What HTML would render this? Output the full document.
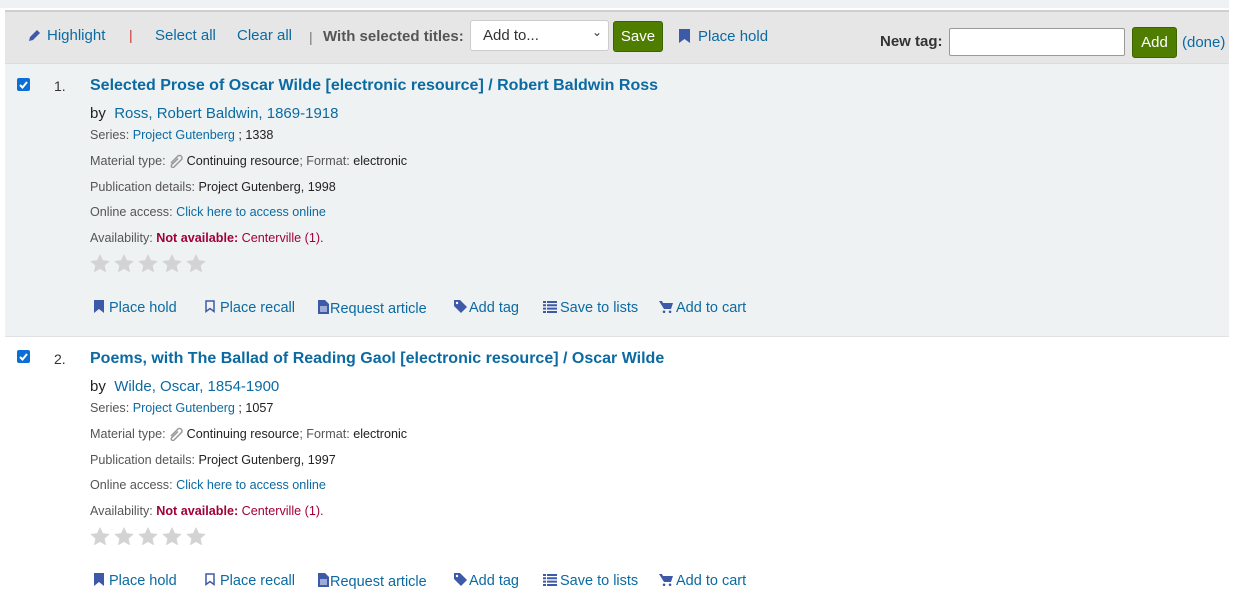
<!DOCTYPE html>
<html><head><meta charset="utf-8"><style>
*{margin:0;padding:0;box-sizing:border-box}
body{width:1239px;height:604px;background:#fff;font-family:"Liberation Sans",sans-serif;position:relative;overflow:hidden;color:#222}
.a{position:absolute;white-space:nowrap}
a,.l{color:#0b6aa2;text-decoration:none}
.g{color:#555}
.sm{font-size:12.6px}
.t{font-size:16px;font-weight:bold;color:#0b6aa2}
.act{font-size:14.5px;color:#0b6aa2}
.act svg{margin-right:5px;vertical-align:-1px}
.ic{fill:#3d5aa8}
.cb{width:13px;height:13px;background:#0b6fd6;border-radius:2px}
.btn{background:#4f7d00;border:1px solid #3d6300;border-radius:3px;color:#fff;font-size:14px;text-align:center}
</style></head><body>
<svg width="0" height="0" style="position:absolute"><defs>
<symbol id="st" viewBox="0 0 20 19"><path d="M10 0l2.9 6.3 6.9.7-5.2 4.6 1.5 6.8L10 14.9 3.9 18.4l1.5-6.8L.2 7l6.9-.7z" fill="#d3d3d3"/></symbol>
<symbol id="clip" viewBox="0 0 14 14"><path d="M2 9l7-7a2.5 2.5 0 0 1 3.5 3.5L5 13a1.6 1.6 0 0 1-2.3-2.3L9 4.5" fill="none" stroke="#999" stroke-width="1.5"/></symbol>
</defs></svg>
<div class="a" style="left:0;top:0;width:1239px;height:8px;background:#eef2f3"></div>
<div class="a" style="left:1229px;top:0;width:10px;height:604px;background:#fff"></div>
<div class="a" style="left:5px;top:10px;width:1224px;height:54px;background:#e6e6e6;border-top:2px solid #cfcfcf;border-bottom:1px solid #dcdcdc"></div>
<svg class="a" style="left:28px;top:29px" width="13" height="13" viewBox="0 0 13 13"><path class="ic" d="M1 12l1-4 7-7 3 3-7 7z"/></svg>
<div class="a act" style="left:47px;top:27px;font-size:15px">Highlight</div>
<div class="a" style="left:129px;top:27px;color:#c33;font-size:14px">|</div>
<div class="a act" style="left:155px;top:27px;font-size:15px">Select all</div>
<div class="a act" style="left:237px;top:27px;font-size:15px">Clear all</div>
<div class="a" style="left:309px;top:29px;color:#777;font-size:14px">|</div>
<div class="a" style="left:323px;top:28px;font-size:15px;font-weight:bold;color:#555">With selected titles:</div>
<div class="a" style="left:470px;top:20px;width:139px;height:31px;background:#fff;border:1px solid #ccc;border-radius:3px;font-size:15px;padding:6px 12px;color:#333">Add to...<span style="position:absolute;right:6px;top:4px;font-size:12px">&#8964;</span></div>
<div class="a btn" style="left:613px;top:21px;width:50px;height:31px;line-height:29px;font-size:15px">Save</div>
<svg class="a" style="left:679px;top:29px" width="11" height="14" viewBox="0 0 11 14"><path class="ic" d="M0 0h11v14l-5.5-4L0 14z"/></svg>
<div class="a act" style="left:698px;top:28px;font-size:15px">Place hold</div>
<div class="a" style="left:880px;top:33px;font-size:15px;font-weight:bold;color:#333">New tag:</div>
<div class="a" style="left:949px;top:28px;width:176px;height:28px;background:#fff;border:1px solid #999;border-radius:2px"></div>
<div class="a btn" style="left:1132px;top:27px;width:45px;height:31px;line-height:29px;font-size:15px">Add</div>
<div class="a act" style="left:1182px;top:34px;font-size:15px">(done)</div>

<div class="a" style="left:5px;top:64px;width:1224px;height:273px;background:#eff2f3;border-bottom:1px solid #dfe3e5"></div>

<div class="a cb" style="left:17px;top:78px"><svg width="13" height="13"><path d="M3 7l2.5 2.5L10 4" stroke="#fff" stroke-width="2" fill="none"/></svg></div>
<div class="a" style="left:54px;top:78px;font-size:14px;color:#333">1.</div>
<div class="a t" style="left:90px;top:77px">Selected Prose of Oscar Wilde [electronic resource] / Robert Baldwin Ross</div>
<div class="a" style="left:90px;top:105px;font-size:15px">by&nbsp; <span class="l">Ross, Robert Baldwin, 1869-1918</span></div>
<div class="a sm g" style="left:90px;top:128px">Series: <span class="l">Project Gutenberg</span> <span style="color:#222">; 1338</span></div>
<div class="a sm g" style="left:90px;top:154px">Material type: <svg width="14" height="14" style="vertical-align:-3px"><use href="#clip"/></svg> <span style="color:#222">Continuing resource</span>; Format: <span style="color:#222">electronic</span></div>
<div class="a sm g" style="left:90px;top:180px">Publication details: <span style="color:#222">Project Gutenberg, 1998</span></div>
<div class="a sm g" style="left:90px;top:205px">Online access: <span class="l">Click here to access online</span></div>
<div class="a sm g" style="left:90px;top:231px">Availability: <b style="color:#a0003a">Not available:</b> <span style="color:#a0003a">Centerville (1).</span></div>
<svg class="a" style="left:90px;top:254px" width="120" height="19"><use href="#st" x="0" width="20" height="19"/><use href="#st" x="24" width="20" height="19"/><use href="#st" x="48" width="20" height="19"/><use href="#st" x="72" width="20" height="19"/><use href="#st" x="96" width="20" height="19"/></svg>
<div class="a act" style="left:94px;top:300px"><svg width="10" height="13" viewBox="0 0 10 13"><path class="ic" d="M0 0h10v13L5 9 0 13z"/></svg>Place hold</div>
<div class="a act" style="left:205px;top:300px"><svg width="10" height="13" viewBox="0 0 10 13"><path d="M1 1h8v10.5L5 8.5 1 11.5z" fill="none" stroke="#3d5aa8" stroke-width="1.5"/></svg>Place recall</div>
<div class="a act" style="left:318px;top:300px"><svg width="11" height="14" viewBox="0 0 11 14" style="margin-right:1px"><path class="ic" d="M0 0h7l4 4v10H0z"/><path d="M2 7h7M2 9h7M2 11h7" stroke="#fff"/></svg>Request article</div>
<div class="a act" style="left:454px;top:300px"><svg width="13" height="13" viewBox="0 0 13 13" style="margin-right:2px"><path class="ic" d="M0 0h6l7 7-6 6-7-7z"/><circle cx="3" cy="3" r="1.2" fill="#fff"/></svg>Add tag</div>
<div class="a act" style="left:543px;top:300px"><svg width="14" height="12" viewBox="0 0 14 12" style="margin-right:3px"><path class="ic" d="M0 0h3v2H0zM4 0h10v2H4zM0 3.3h3v2H0zM4 3.3h10v2H4zM0 6.6h3v2H0zM4 6.6h10v2H4zM0 10h3v2H0zM4 10h10v2H4z"/></svg>Save to lists</div>
<div class="a act" style="left:659px;top:300px"><svg width="14" height="13" viewBox="0 0 14 13" style="margin-right:3px"><path class="ic" d="M0 1h3l1 2h10l-2 6H5zM5 10.5a1.3 1.3 0 1 0 .1 0zM11 10.5a1.3 1.3 0 1 0 .1 0z"/></svg>Add to cart</div>

<div class="a cb" style="left:17px;top:350px"><svg width="13" height="13"><path d="M3 7l2.5 2.5L10 4" stroke="#fff" stroke-width="2" fill="none"/></svg></div>
<div class="a" style="left:54px;top:351px;font-size:14px;color:#333">2.</div>
<div class="a t" style="left:90px;top:350px">Poems, with The Ballad of Reading Gaol [electronic resource] / Oscar Wilde</div>
<div class="a" style="left:90px;top:378px;font-size:15px">by&nbsp; <span class="l">Wilde, Oscar, 1854-1900</span></div>
<div class="a sm g" style="left:90px;top:401px">Series: <span class="l">Project Gutenberg</span> <span style="color:#222">; 1057</span></div>
<div class="a sm g" style="left:90px;top:427px">Material type: <svg width="14" height="14" style="vertical-align:-3px"><use href="#clip"/></svg> <span style="color:#222">Continuing resource</span>; Format: <span style="color:#222">electronic</span></div>
<div class="a sm g" style="left:90px;top:453px">Publication details: <span style="color:#222">Project Gutenberg, 1997</span></div>
<div class="a sm g" style="left:90px;top:478px">Online access: <span class="l">Click here to access online</span></div>
<div class="a sm g" style="left:90px;top:504px">Availability: <b style="color:#a0003a">Not available:</b> <span style="color:#a0003a">Centerville (1).</span></div>
<svg class="a" style="left:90px;top:527px" width="120" height="19"><use href="#st" x="0" width="20" height="19"/><use href="#st" x="24" width="20" height="19"/><use href="#st" x="48" width="20" height="19"/><use href="#st" x="72" width="20" height="19"/><use href="#st" x="96" width="20" height="19"/></svg>
<div class="a act" style="left:94px;top:573px"><svg width="10" height="13" viewBox="0 0 10 13"><path class="ic" d="M0 0h10v13L5 9 0 13z"/></svg>Place hold</div>
<div class="a act" style="left:205px;top:573px"><svg width="10" height="13" viewBox="0 0 10 13"><path d="M1 1h8v10.5L5 8.5 1 11.5z" fill="none" stroke="#3d5aa8" stroke-width="1.5"/></svg>Place recall</div>
<div class="a act" style="left:318px;top:573px"><svg width="11" height="14" viewBox="0 0 11 14" style="margin-right:1px"><path class="ic" d="M0 0h7l4 4v10H0z"/><path d="M2 7h7M2 9h7M2 11h7" stroke="#fff"/></svg>Request article</div>
<div class="a act" style="left:454px;top:573px"><svg width="13" height="13" viewBox="0 0 13 13" style="margin-right:2px"><path class="ic" d="M0 0h6l7 7-6 6-7-7z"/><circle cx="3" cy="3" r="1.2" fill="#fff"/></svg>Add tag</div>
<div class="a act" style="left:543px;top:573px"><svg width="14" height="12" viewBox="0 0 14 12" style="margin-right:3px"><path class="ic" d="M0 0h3v2H0zM4 0h10v2H4zM0 3.3h3v2H0zM4 3.3h10v2H4zM0 6.6h3v2H0zM4 6.6h10v2H4zM0 10h3v2H0zM4 10h10v2H4z"/></svg>Save to lists</div>
<div class="a act" style="left:659px;top:573px"><svg width="14" height="13" viewBox="0 0 14 13" style="margin-right:3px"><path class="ic" d="M0 1h3l1 2h10l-2 6H5zM5 10.5a1.3 1.3 0 1 0 .1 0zM11 10.5a1.3 1.3 0 1 0 .1 0z"/></svg>Add to cart</div>
</body></html>
